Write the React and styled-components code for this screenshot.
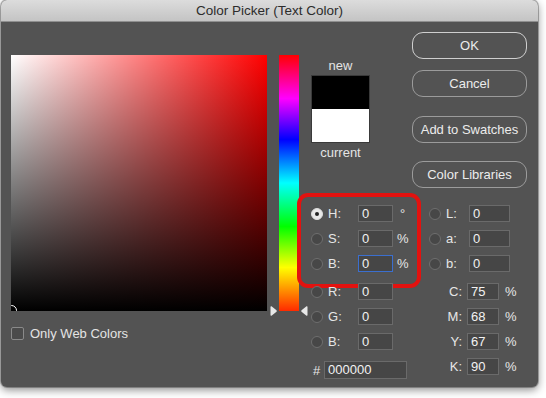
import React from 'react';
import styled, { createGlobalStyle } from 'styled-components';

const GlobalStyle = createGlobalStyle`
  html, body {
    margin: 0;
    padding: 0;
    background: #ffffff;
  }
  body {
    font-family: "Liberation Sans", Arial, sans-serif;
    font-size: 13px;
  }
`;

const Stage = styled.div`
  width: 546px;
  height: 398px;
  padding: 0 0 0 1px;
  box-sizing: border-box;
`;

const Window = styled.div`
  width: 537px;
  height: 387px;
  background: #535353;
  border-radius: 6px;
  overflow: hidden;
  box-shadow: 0 3px 8px rgba(0, 0, 0, 0.45), 0 0 0 1px rgba(0, 0, 0, 0.25);
  display: flex;
  flex-direction: column;
`;

const TitleBar = styled.div`
  height: 21px;
  flex: none;
  background: linear-gradient(to bottom, #dcdcdc, #c4c4c4);
  border-bottom: 1px solid #8f8f8f;
  color: #2c2c2c;
  font-size: 13.5px;
  line-height: 21px;
  text-align: center;
`;

const Body = styled.div`
  flex: 1;
  display: flex;
`;

const LeftPane = styled.div`
  padding: 33px 0 0 10px;
  display: flex;
  flex-direction: column;
`;

const PickerRow = styled.div`
  display: flex;
  gap: 12px;
`;

const Field = styled.div`
  position: relative;
  width: 256px;
  height: 256px;
  overflow: hidden;
  background: linear-gradient(to top, #000 0%, rgba(0, 0, 0, 0) 100%),
    linear-gradient(to right, #ffffff 0%, #ff0000 100%);
`;

const FieldMarker = styled.span`
  position: absolute;
  left: -5px;
  bottom: -5px;
  width: 9px;
  height: 9px;
  border: 1px solid #ffffff;
  border-radius: 50%;
`;

const HueWrap = styled.div`
  position: relative;
  width: 20px;
  height: 256px;
`;

const HueBar = styled.div`
  width: 20px;
  height: 256px;
  background: linear-gradient(
    to bottom,
    #ff0000 0%,
    #ff00ff 17%,
    #0000ff 33%,
    #00ffff 50%,
    #00ff00 67%,
    #ffff00 83%,
    #ff2a00 100%
  );
`;

const HueArrow = styled.svg`
  position: absolute;
  bottom: -5px;
  ${(p) => (p.$side === 'left' ? 'left: -9px;' : 'right: -9px;')}
  width: 7px;
  height: 10px;
`;

const CheckRow = styled.label`
  display: flex;
  align-items: center;
  gap: 6px;
  margin-top: 15px;
  color: #e4e4e4;
  font-size: 13px;
`;

const CheckBox = styled.span`
  width: 11px;
  height: 11px;
  border: 1px solid #8a8a8a;
  border-radius: 2px;
  background: #4b4b4b;
`;

const RightPane = styled.div`
  padding: 10px 0 0 12px;
  display: flex;
  flex-direction: column;
`;

const TopRow = styled.div`
  display: flex;
  align-items: flex-start;
`;

const SwatchCol = styled.div`
  width: 59px;
  margin-top: 27px;
  display: flex;
  flex-direction: column;
  align-items: center;
  color: #e4e4e4;
  font-size: 13px;
  line-height: 14px;
`;

const Swatch = styled.div`
  width: 59px;
  height: 68px;
  box-sizing: border-box;
  border: 1px solid #3a3a3a;
  background: linear-gradient(to bottom, #000 0%, #000 50%, #fff 50%, #fff 100%);
  margin: 2px 0 3px;
`;

const ButtonCol = styled.div`
  margin-left: 42px;
  display: flex;
  flex-direction: column;
`;

const Button = styled.button`
  width: 115px;
  height: 27px;
  margin-top: ${(p) => p.$gap || 0}px;
  border-radius: 11px;
  border: 1px solid ${(p) => (p.$primary ? '#cfcfcf' : '#9b9b9b')};
  background: transparent;
  color: #ececec;
  font-family: "Liberation Sans", Arial, sans-serif;
  font-size: 13px;
  padding: 0;
`;

const Fields = styled.div`
  margin-top: 17px;
  display: grid;
  grid-template-columns: 107px auto;
  column-gap: 11px;
`;

const Column = styled.div`
  display: flex;
  flex-direction: column;
  gap: 11px;
`;

const Group = styled.div`
  position: relative;
  display: flex;
  flex-direction: column;
  gap: 8px;

  ${(p) =>
    p.$highlight &&
    `
    &::after {
      content: '';
      position: absolute;
      left: -14px;
      right: -3px;
      top: -12px;
      bottom: -16px;
      border: 4px solid #e3120f;
      border-radius: 11px;
      pointer-events: none;
    }
  `}
`;

const Row = styled.div`
  display: flex;
  align-items: center;
  height: 17px;
  color: #e6e6e6;
  font-size: 13px;
`;

const Radio = styled.span`
  width: 12px;
  height: 12px;
  box-sizing: border-box;
  border-radius: 50%;
  flex: none;
  margin-right: 5px;
  border: 1px solid ${(p) => (p.$on ? '#dcdcdc' : '#6e6e6e')};
  background: ${(p) => (p.$on ? '#e8e8e8' : '#474747')};
  display: flex;
  align-items: center;
  justify-content: center;

  &::after {
    content: '';
    display: ${(p) => (p.$on ? 'block' : 'none')};
    width: 4px;
    height: 4px;
    border-radius: 50%;
    background: #222;
  }
`;

const Label = styled.span`
  width: ${(p) => p.$w}px;
  flex: none;
  text-align: ${(p) => (p.$right ? 'right' : 'left')};
  padding-right: ${(p) => (p.$right ? 5 : 0)}px;
  box-sizing: border-box;
`;

const Input = styled.div`
  width: ${(p) => p.$w}px;
  height: ${(p) => p.$h || 17}px;
  box-sizing: border-box;
  flex: none;
  background: #464646;
  border: 1px solid ${(p) => (p.$focus ? '#3b6fcf' : '#6a6a6a')};
  color: #f2f2f2;
  font-size: 13px;
  line-height: ${(p) => (p.$h || 17) - 2}px;
  padding-left: 3px;
`;

const Unit = styled.span`
  margin-left: ${(p) => p.$gap || 5}px;
`;

const HexRow = styled(Row)`
  height: 18px;
`;

const Hash = styled.span`
  width: 13px;
  padding-left: 2px;
  box-sizing: border-box;
  flex: none;
`;

const hsb = [
  { k: 'H', v: '0', u: '°', on: true },
  { k: 'S', v: '0', u: '%' },
  { k: 'B', v: '0', u: '%', focus: true },
];
const rgb = [
  { k: 'R', v: '0' },
  { k: 'G', v: '0' },
  { k: 'B', v: '0' },
];
const lab = [
  { k: 'L', v: '0' },
  { k: 'a', v: '0' },
  { k: 'b', v: '0' },
];
const cmyk = [
  { k: 'C', v: '75' },
  { k: 'M', v: '68' },
  { k: 'Y', v: '67' },
  { k: 'K', v: '90' },
];

const Arrow = ({ side }) => (
  <HueArrow $side={side} viewBox="0 0 7 10">
    {side === 'left' ? (
      <path d="M0.5 1 Q0.5 0 1.5 0.3 L6.5 4.3 Q7 5 6.5 5.7 L1.5 9.7 Q0.5 10 0.5 9 Z" fill="#e8e8e8" />
    ) : (
      <path d="M6.5 1 Q6.5 0 5.5 0.3 L0.5 4.3 Q0 5 0.5 5.7 L5.5 9.7 Q6.5 10 6.5 9 Z" fill="#e8e8e8" />
    )}
  </HueArrow>
);

export default function App() {
  return (
    <Stage>
      <GlobalStyle />
      <Window>
        <TitleBar>Color Picker (Text Color)</TitleBar>
        <Body>
          <LeftPane>
            <PickerRow>
              <Field>
                <FieldMarker />
              </Field>
              <HueWrap>
                <HueBar />
                <Arrow side="left" />
                <Arrow side="right" />
              </HueWrap>
            </PickerRow>
            <CheckRow>
              <CheckBox />
              Only Web Colors
            </CheckRow>
          </LeftPane>

          <RightPane>
            <TopRow>
              <SwatchCol>
                new
                <Swatch />
                current
              </SwatchCol>
              <ButtonCol>
                <Button $primary>OK</Button>
                <Button $gap={11}>Cancel</Button>
                <Button $gap={19}>Add to Swatches</Button>
                <Button $gap={18}>Color Libraries</Button>
              </ButtonCol>
            </TopRow>

            <Fields>
              <Column>
                <Group $highlight>
                  {hsb.map((r) => (
                    <Row key={r.k}>
                      <Radio $on={r.on} />
                      <Label $w={30}>{r.k}:</Label>
                      <Input $w={35} $focus={r.focus}>{r.v}</Input>
                      <Unit $gap={r.u === '°' ? 7 : 4}>{r.u}</Unit>
                    </Row>
                  ))}
                </Group>
                <Group>
                  {rgb.map((r, i) => (
                    <Row key={r.k + i}>
                      <Radio />
                      <Label $w={30}>{r.k}:</Label>
                      <Input $w={35}>{r.v}</Input>
                    </Row>
                  ))}
                </Group>
                <HexRow>
                  <Hash>#</Hash>
                  <Input $w={83} $h={18}>000000</Input>
                </HexRow>
              </Column>

              <Column>
                <Group>
                  {lab.map((r) => (
                    <Row key={r.k}>
                      <Radio />
                      <Label $w={23}>{r.k}:</Label>
                      <Input $w={41}>{r.v}</Input>
                    </Row>
                  ))}
                </Group>
                <Group>
                  {cmyk.map((r) => (
                    <Row key={r.k}>
                      <Label $w={38} $right>{r.k}:</Label>
                      <Input $w={32}>{r.v}</Input>
                      <Unit $gap={6}>%</Unit>
                    </Row>
                  ))}
                </Group>
              </Column>
            </Fields>
          </RightPane>
        </Body>
      </Window>
    </Stage>
  );
}
